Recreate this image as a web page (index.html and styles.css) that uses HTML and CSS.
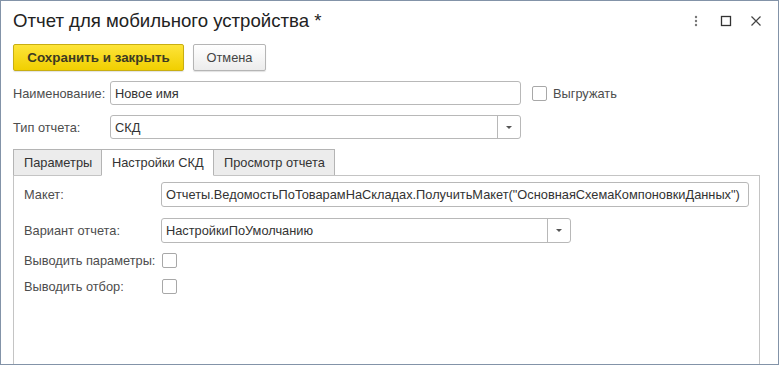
FILE: index.html
```html
<!DOCTYPE html>
<html>
<head>
<meta charset="utf-8">
<link rel="stylesheet" href="styles.css">
</head>
<body>
<div class="window">
  <div class="titlebar">
    <div class="title">Отчет для мобильного устройства *</div>
    <div class="win-icons">
      <svg class="ico dots" width="10" height="12" viewBox="0 0 10 12"><circle cx="5" cy="2" r="1.2" fill="#777"/><circle cx="5" cy="6" r="1.2" fill="#777"/><circle cx="5" cy="10" r="1.2" fill="#777"/></svg>
      <svg class="ico" width="12" height="12" viewBox="0 0 12 12"><rect x="1.5" y="1.5" width="9" height="9" fill="none" stroke="#333" stroke-width="1.3"/></svg>
      <svg class="ico" width="12" height="12" viewBox="0 0 12 12"><path d="M1.5 1.5 L10.5 10.5 M10.5 1.5 L1.5 10.5" stroke="#444" stroke-width="1.2"/></svg>
    </div>
  </div>
  <div class="toolbar">
    <div class="btn btn-primary">Сохранить и закрыть</div>
    <div class="btn btn-cancel">Отмена</div>
  </div>
  <div class="row">
    <div class="label">Наименование:</div>
    <div class="input wide">Новое имя</div>
    <div class="check"></div>
    <div class="check-label">Выгружать</div>
  </div>
  <div class="row">
    <div class="label">Тип отчета:</div>
    <div class="input wide select"><span class="val">СКД</span><span class="drop"><span class="arrow"></span></span></div>
  </div>
  <div class="tabs">
    <div class="tab t1">Параметры</div>
    <div class="tab t2 active">Настройки СКД</div>
    <div class="tab t3">Просмотр отчета</div>
  </div>
  <div class="panel">
    <div class="prow">
      <div class="plabel">Макет:</div>
      <div class="input pinput full">Отчеты.ВедомостьПоТоварамНаСкладах.ПолучитьМакет("ОсновнаяСхемаКомпоновкиДанных")</div>
    </div>
    <div class="prow">
      <div class="plabel">Вариант отчета:</div>
      <div class="input pinput mid select"><span class="val">НастройкиПоУмолчанию</span><span class="drop"><span class="arrow"></span></span></div>
    </div>
    <div class="crow">
      <div class="plabel">Выводить параметры:</div>
      <div class="check"></div>
    </div>
    <div class="crow">
      <div class="plabel">Выводить отбор:</div>
      <div class="check"></div>
    </div>
  </div>
</div>
</body>
</html>
```
FILE: styles.css
```css
html, body {
  margin: 0;
  padding: 0;
  background: #fff;
}
body {
  font-family: "Liberation Sans", Arial, sans-serif;
  font-size: 12.8px;
  color: #333;
}
.window {
  width: 779px;
  height: 365px;
  box-sizing: border-box;
  border: 1px solid #8393a8;
  padding-left: 12px;
  display: flex;
  flex-direction: column;
  overflow: hidden;
}
.titlebar {
  height: 42px;
  flex: none;
  display: flex;
  align-items: center;
  justify-content: space-between;
}
.title {
  font-size: 18.6px;
  color: #222;
  margin-top: -2px;
}
.win-icons {
  display: flex;
  align-items: center;
  gap: 18px;
  padding-right: 16px;
  margin-top: -2px;
}
.ico { display: block; }
.dots { margin-right: 1px; }
.toolbar {
  display: flex;
  gap: 9px;
  height: 27px;
  margin-top: 1px;
  flex: none;
}
.btn {
  box-sizing: border-box;
  height: 27px;
  display: flex;
  align-items: center;
  justify-content: center;
  border: 1px solid #b5b5b5;
  border-radius: 2px;
  background: linear-gradient(#ffffff, #ececec);
  color: #444;
  box-shadow: 0 1px 1px rgba(0,0,0,0.12);
  white-space: nowrap;
}
.btn-primary {
  width: 171px;
  font-weight: bold;
  font-size: 13.4px;
  color: #3d3a22;
  border-color: #c8ae12;
  background: linear-gradient(#fde43a, #f1cf00);
}
.btn-cancel { width: 73px; }
.row {
  display: flex;
  align-items: center;
  height: 24px;
  margin-top: 10px;
  flex: none;
}
.label {
  width: 97px;
  color: #4d4d4d;
}
.input {
  box-sizing: border-box;
  height: 24px;
  border: 1px solid #b8b8b8;
  border-radius: 3px;
  display: flex;
  align-items: center;
  padding-left: 4px;
  color: #333;
  white-space: nowrap;
  overflow: hidden;
}
.wide { width: 411px; }
.select { padding-right: 0; }
.select .val { flex: 1; }
.drop {
  width: 22px;
  height: 100%;
  border-left: 1px solid #b8b8b8;
  display: flex;
  align-items: center;
  justify-content: center;
}
.arrow {
  width: 0;
  height: 0;
  border-left: 3px solid transparent;
  border-right: 3px solid transparent;
  border-top: 3px solid #555;
}
.check {
  box-sizing: border-box;
  width: 15px;
  height: 15px;
  border: 1px solid #a8a8a8;
  border-radius: 2px;
  background: #fff;
  flex: none;
}
.row .check { margin-left: 11px; }
.check-label {
  margin-left: 6px;
  color: #4d4d4d;
}
.tabs {
  display: flex;
  margin-top: 10px;
  height: 27px;
  flex: none;
}
.tab {
  box-sizing: border-box;
  height: 27px;
  padding: 0 10px;
  display: flex;
  align-items: center;
  border: 1px solid #b4b4b4;
  background: #ececec;
  color: #333;
  margin-right: -1px;
  white-space: nowrap;
}
.t1 { width: 89px; }
.t2 { width: 113px; }
.t3 { width: 122px; }
.tab.active {
  background: #fff;
  border-bottom-color: #fff;
  position: relative;
  z-index: 1;
}
.panel {
  flex: 1;
  box-sizing: border-box;
  width: 747px;
  margin-top: -1px;
  border: 1px solid #c4c4c4;
  border-bottom: none;
  padding: 6px 0 0 10px;
}
.prow {
  display: flex;
  align-items: center;
  height: 25px;
  margin-bottom: 11px;
}
.plabel {
  width: 137px;
  color: #4d4d4d;
  white-space: nowrap;
}
.pinput { height: 25px; }
.full { width: 588px; }
.mid { width: 410px; }
.crow {
  display: flex;
  align-items: center;
  height: 15px;
  margin-bottom: 11px;
}
.crow .plabel { width: 138px; }
.prow + .crow { margin-top: -1px; }
```
